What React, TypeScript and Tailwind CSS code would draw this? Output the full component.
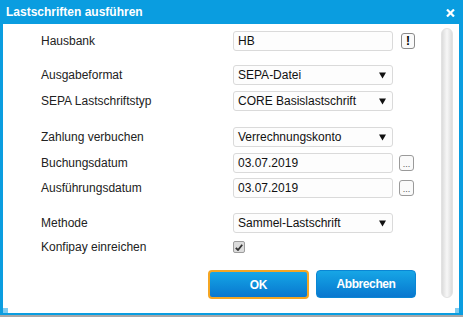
import React from 'react';

const font = { fontFamily: '"Liberation Sans", Arial, sans-serif' };

const Field = ({ value, select }: { value: string; select?: boolean }) => (
  <div className="w-[160px] h-5 flex items-center justify-between pl-[4px] pr-[6px] border border-[#dadada] rounded-[3px] bg-[#fdfdfd] text-[12px] text-[#111]">
    <span>{value}</span>
    {select && (
      <svg width="7" height="7" viewBox="0 0 7 7">
        <path d="M0 0.5 H7 L3.5 6.5 Z" fill="#111" />
      </svg>
    )}
  </div>
);

const Row = ({ label, className, children }: { label: string; className: string; children: React.ReactNode }) => (
  <div className={`flex items-center h-5 ${className}`}>
    <div className="w-[192px] text-[12px] text-[#222]">{label}</div>
    {children}
  </div>
);

const DotsButton = () => (
  <div className="ml-[6px] w-[15px] h-4 border border-[#9a9a9a] rounded-[3px] bg-[#fafafa] flex items-end justify-center text-[9px] leading-[12px] text-[#555]">...</div>
);

export default function App() {
  return (
    <div className="w-[463px] h-[319px] bg-white relative overflow-hidden" style={font}>
      <div className="h-[315px] flex flex-col bg-[#0a9de0]">
        {/* Title bar */}
        <div className="h-6 flex items-center justify-between pl-[6px] pr-[8px]">
          <span className="text-white font-bold text-[12px]">Lastschriften ausführen</span>
          <svg width="9" height="8" viewBox="0 0 9 8" className="mt-[2px]">
            <path d="M1 0.5 L8 7.5 M8 0.5 L1 7.5" stroke="white" strokeWidth="2.2" />
          </svg>
        </div>

        {/* Body */}
        <div className="flex-1 ml-[3px] mr-[4px] mb-[2px] bg-white flex relative">
          <div className="flex-1 flex flex-col pl-[38px] pt-[7px]">
            <Row label="Hausbank" className="">
              <Field value="HB" />
              <div className="ml-[8px] w-[14px] h-4 border border-[#8a8a8a] rounded-[3px] bg-[#fafafa] flex items-center justify-center text-[12px] font-bold text-black">!</div>
            </Row>
            <Row label="Ausgabeformat" className="mt-[14px]">
              <Field value="SEPA-Datei" select />
            </Row>
            <Row label="SEPA Lastschriftstyp" className="mt-[6px]">
              <Field value="CORE Basislastschrift" select />
            </Row>
            <Row label="Zahlung verbuchen" className="mt-4">
              <Field value="Verrechnungskonto" select />
            </Row>
            <Row label="Buchungsdatum" className="mt-[6px]">
              <Field value="03.07.2019" />
              <DotsButton />
            </Row>
            <Row label="Ausführungsdatum" className="mt-[5px]">
              <Field value="03.07.2019" />
              <DotsButton />
            </Row>
            <Row label="Methode" className="mt-[15px]">
              <Field value="Sammel-Lastschrift" select />
            </Row>
            <Row label="Konfipay einreichen" className="mt-[4px]">
              <div className="w-[12px] h-[12px] border border-[#9d9d9d] rounded-[2px] bg-[#dcdcdc] flex items-center justify-center">
                <svg width="8" height="7" viewBox="0 0 8 7">
                  <path d="M0.8 3.8 L3 6 L7.2 0.8" stroke="#333" strokeWidth="1.8" fill="none" />
                </svg>
              </div>
            </Row>
            <div className="flex gap-[7px] mt-[13px] ml-[167px]">
              <button className="w-[101px] h-[29px] rounded-[4px] border-2 border-[#f5a623] bg-gradient-to-b from-[#17a6e6] to-[#0a77cf] text-white font-bold text-[12px] tracking-[-0.3px]">OK</button>
              <button className="w-[100px] h-[28px] rounded-[4px] border border-[#0a86d4] bg-gradient-to-b from-[#17a6e6] to-[#0a77cf] text-white font-bold text-[12px] tracking-[-0.4px]">Abbrechen</button>
            </div>
          </div>
          {/* Scrollbar */}
          <div className="w-[12px] mr-[6px] mt-[4px] mb-[15px] rounded-full bg-gradient-to-r from-[#dcdcdc] via-[#f7f7f7] to-[#dcdcdc] border border-[#e2e2e2]"></div>
          {/* resize handles */}
          <div className="absolute left-0 bottom-0 w-[5px] h-[5px] bg-[#7fcdf2]"></div>
          <div className="absolute right-0 bottom-0 w-[4px] h-[5px] bg-[#7fcdf2]"></div>
        </div>
      </div>
      <div className="h-[2px] bg-[#a8a8a8]"></div>
    </div>
  );
}
